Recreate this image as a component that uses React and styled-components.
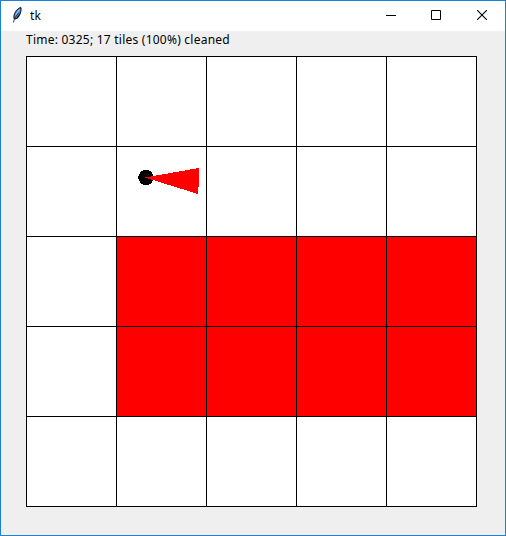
import React from "react";
import styled, { createGlobalStyle } from "styled-components";

const GlobalStyle = createGlobalStyle`
  * { box-sizing: border-box; }
  body { margin: 0; font-family: "Noto Sans", "Open Sans", sans-serif; color: #000; }
`;

const Window = styled.div`
  width: 506px;
  height: 536px;
  border: 1px solid #1a81d7;
  background: #efefef;
  display: flex;
  flex-direction: column;
  overflow: hidden;
`;

const TitleBar = styled.header`
  height: 30px;
  flex: none;
  display: flex;
  background: #fff;
`;

const AppIcon = styled.svg`
  width: 16px;
  height: 20px;
  margin: 4px 5px 0 8px;
  flex: none;
`;

const Title = styled.div`
  flex: 1;
  font-size: 12px;
  line-height: 30px;
  letter-spacing: 0.2px;
`;

const ControlButton = styled.button`
  display: flex;
  align-items: flex-start;
  width: ${(p) => p.$width || 46}px;
  height: 30px;
  padding: 9px 0 0 18px;
  border: 0;
  background: transparent;
`;

const Glyph = styled.svg`
  display: block;
  flex: none;
  width: 10px;
  height: 10px;
  fill: none;
  stroke: #000;
  stroke-width: ${(p) => p.$weight || 1};
`;

const Content = styled.main`
  padding: 0 25px;
`;

const Status = styled.div`
  height: 25px;
  font-size: 12px;
  line-height: 18px;
  white-space: nowrap;
  letter-spacing: 0.235px;
`;

const Room = styled.div`
  display: grid;
  grid-template-columns: repeat(5, 89px);
  grid-auto-rows: 89px;
  gap: 1px;
  width: 451px;
  padding: 1px;
  background: #000;
`;

const Tile = styled.div`
  background: ${(p) => (p.$dirty ? "#f00" : "#fff")};
`;

const Robot = styled.svg`
  display: block;
  width: 89px;
  height: 89px;
`;

const ROOM = ["00000", "0R000", "01111", "01111", "00000"];

function Feather() {
  return (
    <AppIcon viewBox="0 0 16 20">
      <path d="M10.8 2.2 C12.9 1.6 13 4 12.2 7 C11.4 10.5 9.4 13.5 6.6 14.6 L4.6 13.8 C3.6 9.5 6.6 4.5 10.8 2.2Z" fill="#141b28" />
      <path d="M10.9 3.2 C12 3.8 11.4 7 10.2 9 L7 13.2 L5.5 12.6 C5 9 7.8 5 10.9 3.2Z" fill="#5596e6" />
      <path d="M10.2 4.6 L7 9.8" stroke="#a8cff7" strokeWidth="1" />
      <path d="M9.8 7.5 L5.5 13.5 L4.5 17.5" fill="none" stroke="#252525" strokeWidth="0.9" />
    </AppIcon>
  );
}

export default function App() {
  return (
    <>
      <GlobalStyle />
      <Window>
        <TitleBar>
          <Feather />
          <Title>tk</Title>
          <ControlButton aria-label="Minimize" $width={45}>
            <Glyph viewBox="0 0 10 10"><path d="M0 5.5H10" /></Glyph>
          </ControlButton>
          <ControlButton aria-label="Maximize">
            <Glyph viewBox="0 0 10 10"><path d="M0.5 0.5H9.5V9.5H0.5Z" /></Glyph>
          </ControlButton>
          <ControlButton aria-label="Close">
            <Glyph viewBox="0 0 10 10" $weight={1.1}><path d="M0 0L10 10M10 0L0 10" /></Glyph>
          </ControlButton>
        </TitleBar>
        <Content>
          <Status>Time: 0325; 17 tiles (100%) cleaned</Status>
          <Room>
            {ROOM.join("").split("").map((state, i) => (
              <Tile key={i} $dirty={state === "1"}>
                {state === "R" && (
                  <Robot viewBox="117 147 89 89" shapeRendering="crispEdges">
                    <circle cx="146" cy="177.5" r="7.7" fill="#000" />
                    <path d="M145 177.5L199 168V180L198 194Z" fill="#f00" />
                  </Robot>
                )}
              </Tile>
            ))}
          </Room>
        </Content>
      </Window>
    </>
  );
}
